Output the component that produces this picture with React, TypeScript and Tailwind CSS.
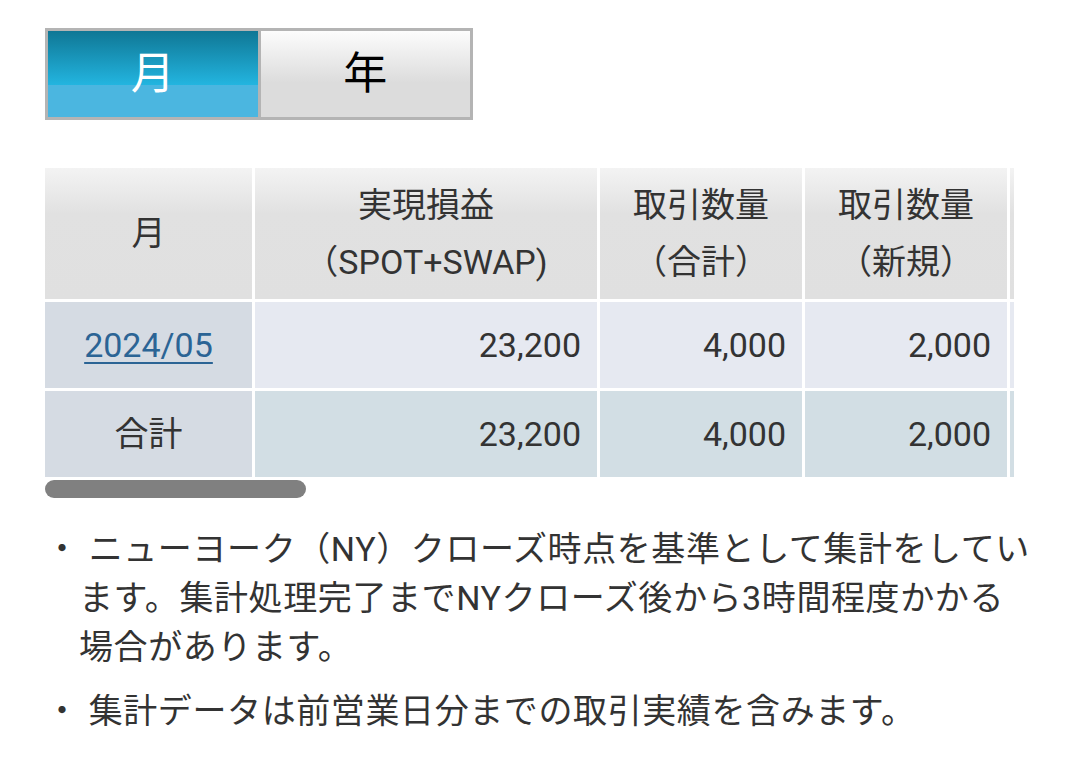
const rows = [
  { month: "2024/05", link: true, pl: "23,200", total: "4,000", fresh: "2,000", bg: "bg-[#e6e9f1]" },
  { month: "合計", link: false, pl: "23,200", total: "4,000", fresh: "2,000", bg: "bg-[#d2dee4]" },
];

const headCell =
  "flex h-[131px] flex-col items-center justify-center bg-[linear-gradient(to_bottom,#f3f3f3_0%,#e1e1e1_35%,#e0e0e0_100%)] leading-[57px]";

export default function App() {
  return (
    <div className="min-h-screen bg-white px-[45px] pt-[28px] font-['Roboto','Noto_Sans_CJK_JP',sans-serif] text-[#333333]">
      {/* 月 / 年 toggle */}
      <div className="flex h-[92px] w-[428px] gap-[3px] border-[3px] border-[#b4b4b4] bg-[#b4b4b4]">
        <button className="flex flex-1 items-center justify-center bg-[linear-gradient(to_bottom,#0f7795_0%,#23b5e0_63%,#4bb6e0_63%,#4bb6e0_100%)] text-[44px] text-white">
          月
        </button>
        <button className="flex flex-1 items-center justify-center bg-[linear-gradient(to_bottom,#fcfcfc_0%,#dcdcdc_60%,#dcdcdc_100%)] text-[44px] text-black">
          年
        </button>
      </div>

      <div className="mt-[48px] w-[969px] overflow-hidden">
        <div className="grid w-max grid-cols-[207px_342px_202px_202px_202px] gap-[3px] text-[34px]">
          <div className={headCell}>月</div>
          <div className={headCell}>
            <span>実現損益</span>
            <span>（SPOT+SWAP)</span>
          </div>
          <div className={headCell}>
            <span>取引数量</span>
            <span>（合計）</span>
          </div>
          <div className={headCell}>
            <span>取引数量</span>
            <span>（新規）</span>
          </div>
          <div className={headCell} />

          {rows.map((r) => (
            <div key={r.month} className="contents">
              <div className="flex h-[86px] items-center justify-center bg-[#d5dbe3]">
                {r.link ? (
                  <a href="#" className="text-[#2b6495] underline decoration-2 underline-offset-[5px]">
                    {r.month}
                  </a>
                ) : (
                  r.month
                )}
              </div>
              <div className={`flex h-[86px] items-center justify-end pr-4 ${r.bg}`}>{r.pl}</div>
              <div className={`flex h-[86px] items-center justify-end pr-4 ${r.bg}`}>{r.total}</div>
              <div className={`flex h-[86px] items-center justify-end pr-4 ${r.bg}`}>{r.fresh}</div>
              <div className={`h-[86px] ${r.bg}`} />
            </div>
          ))}
        </div>
        <div className="mt-[3px] h-[18px] w-[261px] rounded-full bg-[#808080]" />
      </div>

      {/* notes */}
      <ul className="-mr-[20px] mt-[27px] text-[34px] leading-[49px] tracking-[0.6px]">
        <li className="pl-[34px] -indent-[34px]">
          ・ ニューヨーク（NY）クローズ時点を基準として集計をしてい
          <br />
          ます。集計処理完了までNYクローズ後から3時間程度かかる
          <br />
          場合があります。
        </li>
        <li className="mt-[15px] pl-[34px] -indent-[34px]">
          ・ 集計データは前営業日分までの取引実績を含みます。
        </li>
      </ul>
    </div>
  );
}
